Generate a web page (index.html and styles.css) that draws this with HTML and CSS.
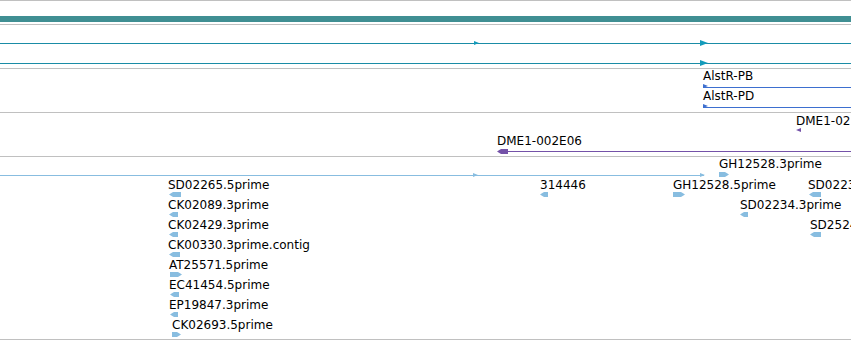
FILE: index.html
```html
<!DOCTYPE html>
<html lang="en">
<head>
    <meta charset="utf-8" />
    <title>tracks</title>
    <link rel="stylesheet" href="styles.css">
</head>
<body>
    <div class="tracks">
        <div class="track track_ref">
            <div class="refbar"></div>
        </div>

        <div class="track track_mid">
            <div class="line teal" style="top:18px;left:0;width:851px;"></div>
            <span class="arr_r teal_a" style="top:16px;left:474px;"></span>
            <span class="arr_r teal_a big" style="top:15px;left:700px;"></span>
            <div class="line teal" style="top:38px;left:0;width:851px;"></div>
            <span class="arr_r teal_a big" style="top:35px;left:700px;"></span>
        </div>

        <div class="track track_mid">
            <div class="label" style="top:0;left:703px;">AlstR-PB</div>
            <div class="line blue" style="top:18px;left:703px;width:148px;"></div>
            <span class="arr_r blue_a" style="top:15px;left:703px;"></span>
            <div class="label" style="top:20px;left:703px;">AlstR-PD</div>
            <div class="line blue" style="top:38px;left:703px;width:148px;"></div>
            <span class="arr_r blue_a" style="top:35px;left:703px;"></span>
        </div>

        <div class="track track_mid">
            <div class="label" style="top:1px;left:796px;">DME1-02E06</div>
            <span class="arr_l purple_a" style="top:15px;left:796px;"></span>
            <div class="label" style="top:21px;left:497px;">DME1-002E06</div>
            <div class="line purple" style="top:38px;left:500px;width:351px;"></div>
            <div class="block purple_b left" style="top:36px;left:497px;width:11px;"></div>
        </div>

        <div class="track track_est">
            <div class="line light" style="top:18px;left:0;width:704px;"></div>
            <span class="arr_r light_a" style="top:16px;left:473px;"></span>
            <span class="arr_r light_a" style="top:16px;left:700px;"></span>
            <div class="label" style="top:0;left:719px;">GH12528.3prime</div>
            <div class="block light_b right" style="top:15px;left:719px;width:10px;"></div>

            <div class="label" style="top:21px;left:168px;">SD02265.5prime</div>
            <div class="block light_b left" style="top:35px;left:169px;width:12px;"></div>
            <div class="label" style="top:41px;left:168px;">CK02089.3prime</div>
            <div class="block light_b left" style="top:55px;left:169px;width:9px;"></div>
            <div class="label" style="top:61px;left:168px;">CK02429.3prime</div>
            <div class="block light_b left" style="top:75px;left:169px;width:9px;"></div>
            <div class="label" style="top:81px;left:168px;">CK00330.3prime.contig</div>
            <div class="block light_b left" style="top:95px;left:169px;width:11px;"></div>
            <div class="label" style="top:101px;left:169px;">AT25571.5prime</div>
            <div class="block light_b right" style="top:115px;left:170px;width:12px;"></div>
            <div class="label" style="top:121px;left:169px;">EC41454.5prime</div>
            <div class="block light_b left" style="top:135px;left:170px;width:9px;"></div>
            <div class="label" style="top:141px;left:169px;">EP19847.3prime</div>
            <div class="block light_b left" style="top:155px;left:170px;width:8px;"></div>
            <div class="label" style="top:161px;left:172px;">CK02693.5prime</div>
            <div class="block light_b right" style="top:175px;left:172px;width:9px;"></div>

            <div class="label" style="top:21px;left:540px;">314446</div>
            <div class="block light_b left" style="top:35px;left:540px;width:8px;"></div>
            <div class="label" style="top:21px;left:673px;">GH12528.5prime</div>
            <div class="block light_b right" style="top:35px;left:673px;width:12px;"></div>
            <div class="label" style="top:21px;left:808px;">SD02234.5prime</div>
            <div class="block light_b left" style="top:35px;left:809px;width:12px;"></div>
            <div class="label" style="top:41px;left:740px;">SD02234.3prime</div>
            <div class="block light_b left" style="top:55px;left:740px;width:8px;"></div>
            <div class="label" style="top:61px;left:810px;">SD25241.5prime</div>
            <div class="block light_b left" style="top:75px;left:810px;width:11px;"></div>
        </div>
    </div>
</body>
</html>
```

FILE: styles.css
```css
html, body {
    margin: 0;
    padding: 0;
    background: #fff;
    font-family: "DejaVu Sans", sans-serif;
    font-size: 12px;
    overflow: hidden;
}

.tracks {
    width: 851px;
    border-top: 1px solid #c0c0c0;
    overflow: hidden;
}

.track {
    position: relative;
    border-bottom: 1px solid #c0c0c0;
    overflow: hidden;
}

.track_ref {
    height: 23px;
}

.track_mid {
    height: 43px;
}

.track_est {
    height: 182px;
}

.refbar {
    position: absolute;
    left: 0;
    right: 0;
    top: 15px;
    height: 6px;
    background-color: #408f93;
}

.label {
    position: absolute;
    line-height: 14px;
    color: #000;
    white-space: nowrap;
}

.line {
    position: absolute;
    height: 1px;
}

    .line.teal {
        background-color: #1a8ca6;
    }

    .line.blue {
        background-color: #3d6fcf;
    }

    .line.purple {
        background-color: #7452a8;
    }

    .line.light {
        background-color: #88bde0;
    }

/* arrow heads */
.arr_r, .arr_l {
    position: absolute;
    width: 0;
    height: 0;
    border-top: 2.5px solid transparent;
    border-bottom: 2.5px solid transparent;
}

.arr_r {
    border-left: 5px solid;
}

.arr_l {
    border-right: 5px solid;
}

    .arr_r.big {
        border-top-width: 3.5px;
        border-bottom-width: 3.5px;
        border-left-width: 8px;
    }

.teal_a {
    border-left-color: #149bbb;
}

.blue_a {
    border-left-color: #3d6fcf;
}

.purple_a {
    border-right-color: #7452a8;
}

.light_a {
    border-left-color: #88bde0;
}

/* small feature blocks */
.block {
    position: absolute;
    height: 5px;
}

    .block.left {
        clip-path: polygon(0 50%, 4px 0, 100% 0, 100% 100%, 4px 100%);
    }

    .block.right {
        clip-path: polygon(0 0, calc(100% - 4px) 0, 100% 50%, calc(100% - 4px) 100%, 0 100%);
    }

.light_b {
    background-color: #88bde0;
}

.purple_b {
    background-color: #7452a8;
}
```
